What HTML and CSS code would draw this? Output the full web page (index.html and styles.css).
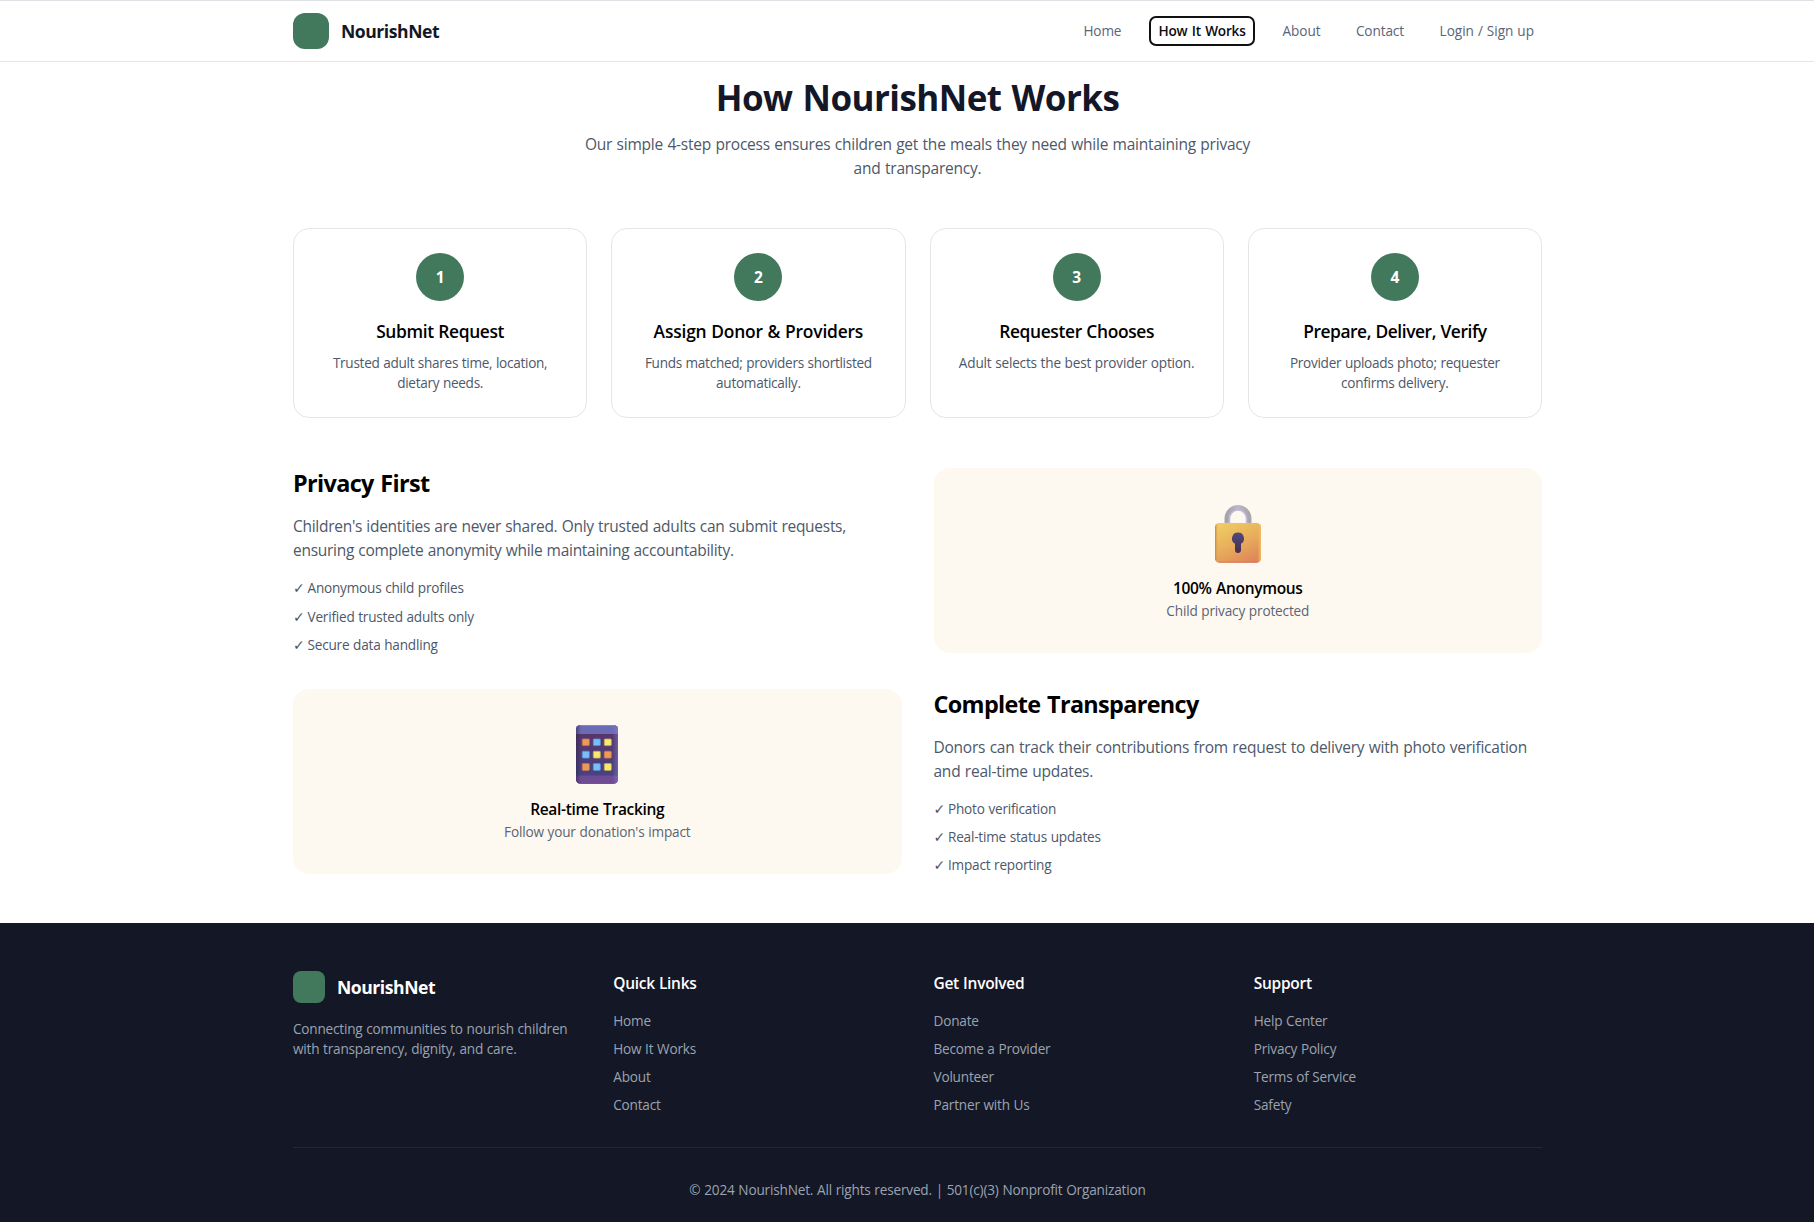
FILE: index.html
```html
<!DOCTYPE html>
<html lang="en">
<head>
<meta charset="utf-8">
<title>How It Works | NourishNet</title>
<link rel="stylesheet" href="styles.css">
</head>
<body>
<header class="header">
  <div class="container header-row">
    <div class="brand"><span class="logo"></span><span class="brand-name">NourishNet</span></div>
    <nav class="nav">
      <a class="nav-home">Home</a>
      <a class="active">How It Works</a>
      <a>About</a>
      <a>Contact</a>
      <a class="nav-login">Login / Sign up</a>
    </nav>
  </div>
</header>

<main class="container main">
  <section class="hero">
    <h1>How NourishNet Works</h1>
    <p>Our simple 4-step process ensures children get the meals they need while maintaining privacy<br>and transparency.</p>
  </section>

  <section class="steps">
    <article class="step"><div class="num">1</div><h3>Submit Request</h3><p>Trusted adult shares time, location,<br>dietary needs.</p></article>
    <article class="step"><div class="num">2</div><h3 class="wide">Assign Donor &amp; Providers</h3><p>Funds matched; providers shortlisted<br>automatically.</p></article>
    <article class="step"><div class="num">3</div><h3>Requester Chooses</h3><p class="single">Adult selects the best provider option.</p></article>
    <article class="step"><div class="num">4</div><h3 class="tight">Prepare, Deliver, Verify</h3><p>Provider uploads photo; requester<br>confirms delivery.</p></article>
  </section>

  <section class="features">
    <div class="feature privacy">
      <h2>Privacy First</h2>
      <p>Children's identities are never shared. Only trusted adults can submit requests,<br>ensuring complete anonymity while maintaining accountability.</p>
      <ul>
        <li><span class="check">✓</span>Anonymous child profiles</li>
        <li><span class="check">✓</span>Verified trusted adults only</li>
        <li><span class="check">✓</span>Secure data handling</li>
      </ul>
    </div>
    <div class="panel">
      <svg class="icon" viewBox="0 0 64 64" aria-hidden="true">
        <defs>
          <linearGradient id="body" x1="0.2" y1="0" x2="0.75" y2="1"><stop offset="0" stop-color="#f0cb62"/><stop offset="0.5" stop-color="#e8ae5c"/><stop offset="1" stop-color="#df8559"/></linearGradient>
          <linearGradient id="edge" x1="0" y1="0" x2="1" y2="0"><stop offset="0" stop-color="#c57f4c"/><stop offset="0.07" stop-color="#e6ae58" stop-opacity="0"/><stop offset="0.92" stop-color="#eeb65c" stop-opacity="0"/><stop offset="1" stop-color="#f0bd62"/></linearGradient>
          <linearGradient id="shackle" x1="0" y1="0" x2="1" y2="0"><stop offset="0" stop-color="#a5a4ac"/><stop offset="0.5" stop-color="#bdb8c8"/><stop offset="1" stop-color="#a9a6b0"/></linearGradient>
          <linearGradient id="hole" x1="0" y1="0" x2="0" y2="1"><stop offset="0" stop-color="#50497a"/><stop offset="1" stop-color="#452e52"/></linearGradient>
        </defs>
        <path d="M21.300 26V18.500a10.700 10.700 0 0 1 21.400 0V26" fill="none" stroke="url(#shackle)" stroke-width="5.600"/>
        <path d="M23.400 24V18.500a8.600 8.600 0 0 1 17.200 0V24" fill="none" stroke="#c8bad6" stroke-width="1.500"/>
        <rect x="9" y="23" width="46" height="39.800" rx="4.500" fill="url(#body)"/>
        <rect x="9" y="23" width="46" height="39.800" rx="4.500" fill="url(#edge)"/>
        <path d="M12.500 62.100h39" stroke="#d9725c" stroke-width="1.200" opacity=".7"/>
        <path d="M32 32.500a6 6 0 0 1 3 11.200V50a3 3 0 0 1-6 0v-6.300A6 6 0 0 1 32 32.500z" fill="url(#hole)"/>
      </svg>
      <h4>100% Anonymous</h4>
      <p>Child privacy protected</p>
    </div>
    <div class="panel">
      <svg class="icon" viewBox="0 0 64 64" aria-hidden="true">
        <defs>
          <clipPath id="case"><rect x="11" y="4" width="42" height="58.700" rx="4.500"/></clipPath>
          <linearGradient id="screen" x1="0" y1="0" x2="0" y2="1"><stop offset="0" stop-color="#5b3267"/><stop offset="1" stop-color="#454685"/></linearGradient>
          <linearGradient id="side" x1="0" y1="0" x2="1" y2="0"><stop offset="0" stop-color="#2c2548" stop-opacity=".55"/><stop offset="0.12" stop-color="#2c2548" stop-opacity="0"/><stop offset="0.86" stop-color="#8e86cc" stop-opacity="0"/><stop offset="1" stop-color="#8e86cc" stop-opacity=".45"/></linearGradient>
        </defs>
        <g clip-path="url(#case)">
          <rect x="11" y="4" width="42" height="59" fill="url(#screen)"/>
          <rect x="11" y="4" width="42" height="9" fill="#6c6bb5"/>
          <rect x="11" y="4" width="42" height="1" fill="#8b83c8"/>
          <rect x="11" y="54.500" width="42" height="9" fill="#704b95"/>
          <rect x="11" y="4" width="42" height="59" fill="url(#side)"/>
        </g>
        <g stroke-width=".8">
          <g fill="#ee9a55" stroke="#c87850"><rect x="17.300" y="18" width="7" height="6.600" rx=".8"/><rect x="39.300" y="30.300" width="7" height="6.800" rx=".8"/><rect x="17.300" y="42.600" width="7" height="6.800" rx=".8"/></g>
          <g fill="#78c0fa" stroke="#5d92cc"><rect x="28.300" y="18" width="7" height="6.600" rx=".8"/><rect x="17.300" y="30.300" width="7" height="6.800" rx=".8"/><rect x="28.300" y="42.600" width="7" height="6.800" rx=".8"/></g>
          <g fill="#f8eb6c" stroke="#c0a860"><rect x="39.300" y="18" width="7" height="6.600" rx=".8"/><rect x="28.300" y="30.300" width="7" height="6.800" rx=".8"/><rect x="39.300" y="42.600" width="7" height="6.800" rx=".8"/></g>
        </g>
      </svg>
      <h4>Real-time Tracking</h4>
      <p>Follow your donation's impact</p>
    </div>
    <div class="feature transparency">
      <h2>Complete Transparency</h2>
      <p>Donors can track their contributions from request to delivery with photo verification<br>and real-time updates.</p>
      <ul>
        <li><span class="check">✓</span>Photo verification</li>
        <li><span class="check">✓</span>Real-time status updates</li>
        <li><span class="check">✓</span>Impact reporting</li>
      </ul>
    </div>
  </section>
</main>

<footer class="footer">
  <div class="container">
    <div class="footer-grid">
      <div>
        <div class="brand"><span class="logo small"></span><span class="brand-name">NourishNet</span></div>
        <p class="tagline">Connecting communities to nourish children<br>with transparency, dignity, and care.</p>
      </div>
      <div><h5>Quick Links</h5><ul><li>Home</li><li>How It Works</li><li>About</li><li>Contact</li></ul></div>
      <div><h5>Get Involved</h5><ul><li>Donate</li><li>Become a Provider</li><li>Volunteer</li><li>Partner with Us</li></ul></div>
      <div><h5>Support</h5><ul><li>Help Center</li><li>Privacy Policy</li><li>Terms of Service</li><li>Safety</li></ul></div>
    </div>
    <p class="copyright">© 2024 NourishNet. All rights reserved. | 501(c)(3) Nonprofit Organization</p>
  </div>
</footer>
</body>
</html>
```
FILE: styles.css
```css
* { box-sizing: border-box; margin: 0; padding: 0; }
body {
  background: #fff;
  color: #000;
  font-family: "Open Sans", "Noto Sans", sans-serif;
  font-size: 13.6px;
  line-height: 20px;
  letter-spacing: -0.25px;
  word-spacing: 0.4px;
}
ul { list-style: none; }
.container { width: 1249px; margin-left: 293px; }

.header { height: 62px; border-top: 1px solid #e0e1e7; border-bottom: 1px solid #e5e7eb; }
.header-row { height: 60px; display: flex; align-items: center; justify-content: space-between; }
.brand { display: flex; align-items: center; gap: 12px; }
.logo { width: 36px; height: 36px; border-radius: 12px; background: #42785c; }
.logo.small { width: 32px; height: 32px; border-radius: 8px; }
.brand-name { font-size: 17.6px; font-weight: 700; letter-spacing: -0.47px; color: #141725; }
.nav { display: flex; align-items: center; gap: 19.500px; color: #5a6478; letter-spacing: -0.1px; }
.nav a { padding: 0 8px; }
.nav .nav-login { letter-spacing: 0; }
.nav .active {
  height: 30px;
  padding: 0 7.500px;
  display: flex;
  align-items: center;
  border: 2px solid #111;
  border-radius: 7px;
  color: #0b0c10;
  font-weight: 600;
  letter-spacing: -0.2px;
  word-spacing: 1px;
}

.hero { padding-top: 16px; text-align: center; }
.hero h1 { font-size: 35px; line-height: 40px; font-weight: 700; letter-spacing: -0.55px; word-spacing: 1.500px; color: #141728; }
.hero p { margin-top: 14px; font-size: 15.5px; line-height: 24px; letter-spacing: -0.22px; word-spacing: 0.6px; color: #4d586a; }

.steps { margin-top: 48px; display: grid; grid-template-columns: repeat(4, 1fr); gap: 24px; }
.step { height: 190px; padding: 24px; border: 1px solid #e6e6e9; border-radius: 16px; text-align: center; white-space: nowrap; }
.num {
  width: 48px; height: 48px;
  margin: 0 auto 16px;
  border-radius: 50%;
  background: #42785c;
  color: #fff;
  font-size: 15.5px;
  font-weight: 700;
  line-height: 48px;
}
.step h3 { font-size: 17.4px; line-height: 28px; font-weight: 600; letter-spacing: -0.36px; }
.step h3.wide { letter-spacing: -0.18px; }
.step h3.tight { letter-spacing: -0.44px; }
.step p { margin-top: 8px; color: #4d586a; letter-spacing: -0.29px; }
.step p.single { letter-spacing: -0.19px; }

.features { margin-top: 50px; display: grid; grid-template-columns: 1fr 1fr; grid-auto-rows: 186px; column-gap: 32px; row-gap: 35px; }
.feature { color: #4d586a; }
.feature h2 { font-size: 23.4px; line-height: 31px; font-weight: 700; letter-spacing: -0.65px; word-spacing: 1.200px; color: #000; }
.feature p { margin: 15px 0 16px; font-size: 15.5px; line-height: 24px; letter-spacing: -0.28px; word-spacing: 0.5px; white-space: nowrap; }
.feature.transparency p { letter-spacing: -0.24px; word-spacing: 0.7px; }
.feature li { display: flex; margin-bottom: 8px; letter-spacing: -0.21px; }
.feature.privacy li { margin-bottom: 8.500px; }
.check { width: 14.500px; font-family: "DejaVu Sans", sans-serif; font-size: 14px; letter-spacing: 0; }
.panel { height: 185px; padding: 32px; border-radius: 16px; background: #fef9f0; text-align: center; }
.icon { display: block; width: 64px; height: 64px; margin: 0 auto 12px; }
.panel h4 { font-size: 15.5px; line-height: 24px; font-weight: 600; letter-spacing: -0.32px; word-spacing: 0.8px; }
.panel p { line-height: 21px; color: #5a6475; letter-spacing: -0.17px; }

.footer { margin-top: 48px; height: 299px; padding-top: 48px; background: #141725; color: #9ba3b0; letter-spacing: -0.2px; }
.footer .brand-name { color: #fff; }
.footer-grid { display: grid; grid-template-columns: repeat(4, 1fr); gap: 32px; padding-bottom: 32px; border-bottom: 1px solid #242834; }
.tagline { margin-top: 16px; }
.footer h5 { margin-bottom: 16px; font-size: 15.5px; line-height: 24px; font-weight: 600; letter-spacing: -0.28px; color: #fff; }
.footer li + li { margin-top: 8px; }
.copyright { margin-top: 32px; text-align: center; letter-spacing: -0.18px; }
```
